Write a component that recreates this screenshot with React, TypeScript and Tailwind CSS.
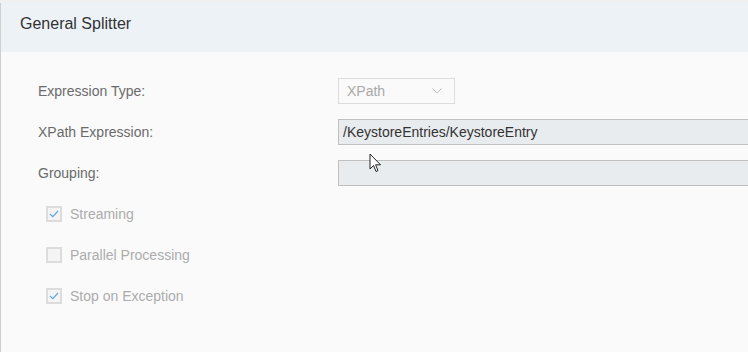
import React from 'react';

const font = { fontFamily: '"Liberation Sans", Arial, sans-serif' };

const Check: React.FC<{ checked: boolean; label: string }> = ({ checked, label }) => (
  <div className="flex items-center h-[26px] pl-[45px]">
    <div className="w-[16px] h-[16px] border-2 border-[#dcdcdc] bg-[#f4f4f4] flex items-center justify-center">
      {checked && (
        <svg width="10" height="8" viewBox="0 0 10 8" fill="none">
          <path d="M1 4 L3.8 6.6 L9 1" stroke="#5ea7df" strokeWidth="1.2" />
        </svg>
      )}
    </div>
    <span className="ml-[8px] text-[14px] text-[#acacac]">{label}</span>
  </div>
);

const Row: React.FC<{ label: string; children: React.ReactNode }> = ({ label, children }) => (
  <div className="flex items-center h-[26px]">
    <div className="w-[337px] pl-[37px] text-[14px] text-[#6a6a6a] shrink-0">{label}</div>
    {children}
  </div>
);

export default function App() {
  return (
    <div className="w-[748px] h-[352px] overflow-hidden bg-[#f0f0f0] pt-[3px] relative" style={font}>
      <div className="h-full border-l border-[#cfcfcf] flex flex-col">
        <div className="h-[49px] bg-[#edf2f7] pl-[19px] pt-[9px] text-[16px] text-[#333333] shrink-0">
          General Splitter
        </div>
        <div className="flex-1 bg-[#fafafa] pt-[26px] flex flex-col gap-[15px]">
          <Row label="Expression Type:">
            <div className="w-[117px] h-[26px] border border-[#dcdcdc] bg-[#fafafa] flex items-center justify-between pl-[8px] pr-[12px] text-[14px] text-[#a9a9a9]">
              <span>XPath</span>
              <svg width="10" height="6" viewBox="0 0 10 6" fill="none">
                <path d="M0.5 0.5 L5 5 L9.5 0.5" stroke="#bdbdbd" strokeWidth="1" />
              </svg>
            </div>
          </Row>
          <Row label="XPath Expression:">
            <div className="w-[500px] h-[26px] border border-[#c0c0c0] bg-[#e9ecef] flex items-center pl-[4px] text-[14px] text-[#333333] shrink-0">
              /KeystoreEntries/KeystoreEntry
            </div>
          </Row>
          <Row label="Grouping:">
            <div className="w-[500px] h-[26px] border border-[#c0c0c0] bg-[#e9ecef] shrink-0" />
          </Row>
          <Check checked label="Streaming" />
          <Check checked={false} label="Parallel Processing" />
          <Check checked label="Stop on Exception" />
        </div>
      </div>
      <svg className="absolute left-[369px] top-[153px]" width="13" height="20" viewBox="0 0 13 20">
        <path
          d="M1 1 L1 16 L4.5 12.5 L7 18.5 L9 17.6 L6.6 11.8 L11.5 11.8 Z"
          fill="#ffffff"
          stroke="#222222"
          strokeWidth="1"
          strokeLinejoin="round"
        />
      </svg>
    </div>
  );
}
